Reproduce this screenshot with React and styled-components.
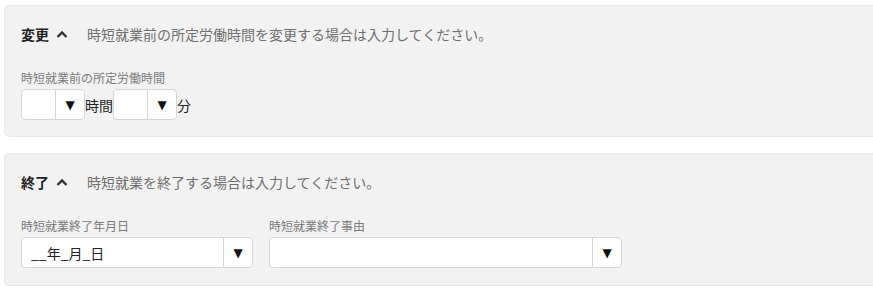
import React from "react";
import styled, { createGlobalStyle } from "styled-components";

const GlobalStyle = createGlobalStyle`
  html, body {
    margin: 0;
    padding: 0;
    background: #fff;
    overflow: hidden;
  }
  body {
    font-family: "Noto Sans CJK JP", "Noto Sans", sans-serif;
    color: #333;
  }
`;

const Page = styled.div`
  display: flex;
  flex-direction: column;
  gap: 16px;
  padding: 5px 0 0 4px;
  width: 900px;
`;

const Panel = styled.section`
  background: #f2f2f2;
  border: 1px solid #e8e8e8;
  border-radius: 5px;
  padding: 18px 16px ${(p) => p.$bottom}px 16px;
`;

const Header = styled.div`
  display: flex;
  align-items: center;
  height: 20px;
`;

const Title = styled.span`
  font-size: 14px;
  font-weight: 700;
  color: #222;
  line-height: 20px;
`;

const Toggle = styled.svg`
  width: 12px;
  height: 8px;
  margin-left: 7px;
  margin-right: 19px;
`;

const Description = styled.span`
  font-size: 14px;
  color: #6f6f6f;
  line-height: 20px;
`;

const Fields = styled.div`
  display: flex;
  gap: 16px;
  margin-top: 26px;
`;

const Field = styled.div`
  display: flex;
  flex-direction: column;
  gap: 3px;
`;

const Label = styled.label`
  font-size: 12px;
  line-height: 16px;
  color: #7a7a7a;
`;

const Row = styled.div`
  display: flex;
  align-items: center;
`;

const Select = styled.div`
  display: flex;
  width: ${(p) => p.$width}px;
  height: 31px;
  box-sizing: border-box;
  background: #fff;
  border: 1px solid #d6d6d6;
  border-radius: 4px;
`;

const Value = styled.div`
  flex: 1;
  display: flex;
  align-items: center;
  padding-left: 9px;
  font-size: 14px;
  color: #222;
`;

const Arrow = styled.div`
  width: 28px;
  display: flex;
  align-items: center;
  justify-content: center;
  border-left: 1px solid #d6d6d6;
  font-family: "DejaVu Sans", sans-serif;
  font-size: 12px;
  color: #111;
`;

const Unit = styled.span`
  font-size: 14px;
  color: #222;
  line-height: 20px;
`;

function Chevron() {
  return (
    <Toggle viewBox="0 0 12 8">
      <polyline points="1.5,7 6,2.5 10.5,7" fill="none" stroke="#333" strokeWidth="2.4" />
    </Toggle>
  );
}

function Dropdown({ width, value }) {
  return (
    <Select $width={width}>
      <Value>{value}</Value>
      <Arrow>▼</Arrow>
    </Select>
  );
}

export default function App() {
  return (
    <>
      <GlobalStyle />
      <Page>
        <Panel $bottom={16}>
          <Header>
            <Title>変更</Title>
            <Chevron />
            <Description>時短就業前の所定労働時間を変更する場合は入力してください。</Description>
          </Header>
          <Fields>
            <Field>
              <Label>時短就業前の所定労働時間</Label>
              <Row>
                <Dropdown width={64} />
                <Unit>時間</Unit>
                <Dropdown width={64} />
                <Unit>分</Unit>
              </Row>
            </Field>
          </Fields>
        </Panel>
        <Panel $bottom={17}>
          <Header>
            <Title>終了</Title>
            <Chevron />
            <Description>時短就業を終了する場合は入力してください。</Description>
          </Header>
          <Fields>
            <Field>
              <Label>時短就業終了年月日</Label>
              <Dropdown width={232} value="__年_月_日" />
            </Field>
            <Field>
              <Label>時短就業終了事由</Label>
              <Dropdown width={353} />
            </Field>
          </Fields>
        </Panel>
      </Page>
    </>
  );
}
